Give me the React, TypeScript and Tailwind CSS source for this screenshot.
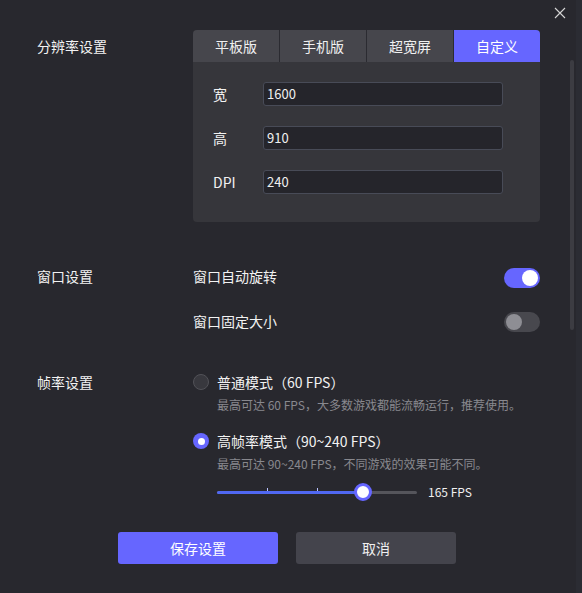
import React from "react";

const font = { fontFamily: '"Noto Sans CJK SC", "Noto Sans", sans-serif' };

function Toggle({ on }: { on: boolean }) {
  return (
    <div
      className={
        "w-9 h-5 rounded-full flex items-center px-[2px] " +
        (on ? "bg-[#6666ff] justify-end" : "bg-[#48484e] justify-start")
      }
    >
      <div className={"w-4 h-4 rounded-full " + (on ? "bg-white" : "bg-[#8e8e94]")} />
    </div>
  );
}

function Radio({ on }: { on: boolean }) {
  return on ? (
    <div className="w-4 h-4 rounded-full bg-[#6666ff] flex items-center justify-center shrink-0">
      <div className="w-[7px] h-[7px] rounded-full bg-white" />
    </div>
  ) : (
    <div className="w-4 h-4 rounded-full bg-[#38383e] border border-[#525258] shrink-0" />
  );
}

function Field({ label, value }: { label: string; value: string }) {
  return (
    <div className="flex items-center h-6">
      <div className="w-[50px] text-[14px] text-[#f2f2f2]">{label}</div>
      <div className="w-[240px] h-6 rounded-[3px] bg-[#25252b] border border-[#484b57] flex items-center px-[3px] text-[13px] text-[#f0f0f0]">
        {value}
      </div>
    </div>
  );
}

export default function App() {
  const tabs = ["平板版", "手机版", "超宽屏", "自定义"];
  return (
    <div className="w-[582px] h-[593px] bg-[#28282e] flex relative overflow-hidden text-[#f2f2f2]" style={font}>
      <div className="w-[576px] pt-[30px]">
        <div className="pl-[37px]">
          {/* Resolution */}
          <div className="flex items-start">
            <div className="w-[156px] h-8 flex items-center text-[14px]">分辨率设置</div>
            <div className="w-[347px] rounded bg-[#36363b] overflow-hidden">
              <div className="grid grid-cols-4 gap-px bg-[#2b2b31] h-8">
                {tabs.map((t, i) => (
                  <div
                    key={t}
                    className={
                      "flex items-center justify-center text-[14px] " +
                      (i === 3 ? "bg-[#6666ff] text-white" : "bg-[#46464c] text-[#f0f0f0]")
                    }
                  >
                    {t}
                  </div>
                ))}
              </div>
              <div className="pt-5 pb-7 pl-5 flex flex-col gap-5">
                <Field label="宽" value="1600" />
                <Field label="高" value="910" />
                <Field label="DPI" value="240" />
              </div>
            </div>
          </div>

          {/* Window */}
          <div className="flex items-start mt-[41px]">
            <div className="w-[156px] h-[30px] flex items-center text-[14px] pb-[3px]">窗口设置</div>
            <div className="w-[347px] flex flex-col gap-[14px]">
              <div className="h-[30px] flex items-center justify-between">
                <span className="text-[14px] pb-[3px]">窗口自动旋转</span>
                <Toggle on={true} />
              </div>
              <div className="h-[30px] flex items-center justify-between">
                <span className="text-[14px] pb-[2px]">窗口固定大小</span>
                <Toggle on={false} />
              </div>
            </div>
          </div>

          {/* Frame rate */}
          <div className="flex items-start mt-[33px]">
            <div className="w-[156px] h-6 flex items-center text-[14px]">帧率设置</div>
            <div className="w-[347px] flex flex-col">
              <div className="h-6 flex items-center gap-2">
                <Radio on={false} />
                <span className="text-[14px]">普通模式（60 FPS）</span>
              </div>
              <div className="h-[18px] mt-[2px] pl-6 flex items-center text-[12px] text-[#88888e] whitespace-nowrap">
                最高可达 60 FPS，大多数游戏都能流畅运行，推荐使用。
              </div>
              <div className="h-6 mt-[15px] flex items-center gap-2">
                <Radio on={true} />
                <span className="text-[14px]">高帧率模式（90~240 FPS）</span>
              </div>
              <div className="h-[18px] mt-[2px] pl-6 flex items-center text-[12px] text-[#88888e] whitespace-nowrap">
                最高可达 90~240 FPS，不同游戏的效果可能不同。
              </div>
              <div className="h-5 mt-[9px] pl-6 flex items-center">
                <div className="relative w-[200px] h-5 flex items-center">
                  <div className="w-full h-[3px] rounded-full bg-[#55555b] flex">
                    <div className="h-full w-[73%] rounded-full bg-[#5068f2]" />
                  </div>
                  <div className="absolute left-[25%] top-[6px] w-px h-[3px] bg-[#b8c2ff]" />
                  <div className="absolute left-[50%] top-[6px] w-px h-[3px] bg-[#b8c2ff]" />
                  <div className="absolute left-[137px] top-[1px] w-[18px] h-[18px] rounded-full bg-white border-[3px] border-[#6666ff]" />
                </div>
                <span className="ml-[11px] text-[12px] text-[#f0f0f0]">165 FPS</span>
              </div>
            </div>
          </div>
        </div>

        {/* Buttons */}
        <div className="flex gap-[18px] mt-[30px] pl-[118px]">
          <button className="w-[160px] h-8 rounded-[3px] bg-[#6666ff] text-[14px] text-white">保存设置</button>
          <button className="w-[160px] h-8 rounded-[3px] bg-[#44444c] text-[14px] text-[#f0f0f0]">取消</button>
        </div>
      </div>
      <div className="flex-1 bg-[#2b2c33]" />

      {/* close */}
      <svg className="absolute left-[554px] top-[7px]" width="12" height="12" viewBox="0 0 12 12">
        <path d="M1 1 L11 11 M11 1 L1 11" stroke="#d6d6d6" strokeWidth="1.1" />
      </svg>
      {/* scrollbar */}
      <div className="absolute left-[570px] top-[60px] w-1 h-[270px] rounded-full bg-[#3c3c42]" />
    </div>
  );
}
